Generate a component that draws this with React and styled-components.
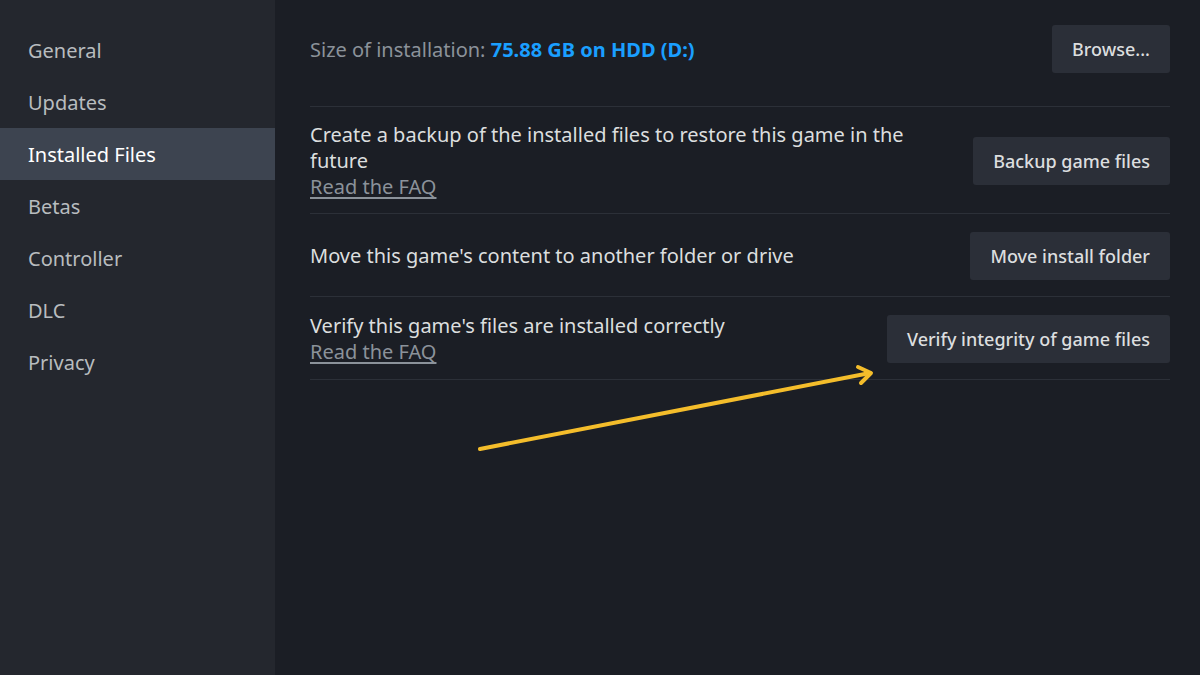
import React from "react";
import styled, { createGlobalStyle } from "styled-components";

const NAV = ["General", "Updates", "Installed Files", "Betas", "Controller", "DLC", "Privacy"];

const ROWS = [
  {
    text: "Create a backup of the installed files to restore this game in the future",
    faq: true,
    button: "Backup game files",
  },
  { text: "Move this game's content to another folder or drive", button: "Move install folder" },
  { text: "Verify this game's files are installed correctly", faq: true, button: "Verify integrity of game files" },
];

const App = () => (
  <Page>
    <GlobalStyle />
    <Sidebar>
      {NAV.map(item => (
        <NavItem key={item} active={item === "Installed Files"}>
          {item}
        </NavItem>
      ))}
    </Sidebar>
    <Main>
      <SizeRow>
        <SizeText>
          Size of installation: <Blue>75.88 GB on HDD (D:)</Blue>
        </SizeText>
        <Button>Browse...</Button>
      </SizeRow>
      {ROWS.map(row => (
        <Row key={row.button}>
          <RowText>
            <Description>{row.text}</Description>
            {row.faq && <Faq href="#">Read the FAQ</Faq>}
          </RowText>
          <Button>{row.button}</Button>
        </Row>
      ))}
      <Arrow viewBox="0 0 1200 675">
        <line x1="480" y1="449" x2="870" y2="373" stroke="#f4bd2b" strokeWidth="4" strokeLinecap="round" />
        <polyline
          points="858,367 871,373 861,383"
          fill="none"
          stroke="#f4bd2b"
          strokeWidth="4"
          strokeLinecap="round"
          strokeLinejoin="round"
        />
      </Arrow>
    </Main>
  </Page>
);

const GlobalStyle = createGlobalStyle`
  body {
    margin: 0;
    background: #1b1e25;
    font-family: "Noto Sans", "Open Sans", sans-serif;
  }
`;

const Page = styled.div`
  display: flex;
  width: 1200px;
  height: 675px;
  overflow: hidden;
  position: relative;
`;

const Sidebar = styled.nav`
  width: 275px;
  flex-shrink: 0;
  background: #24272e;
  padding-top: 24px;
  display: flex;
  flex-direction: column;
`;

const NavItem = styled.div`
  height: 52px;
  display: flex;
  align-items: center;
  padding-left: 28px;
  font-size: 20px;
  color: ${p => (p.active ? "#ffffff" : "#b8bcbf")};
  background: ${p => (p.active ? "#3d4450" : "transparent")};
`;

const Main = styled.main`
  flex: 1;
  padding: 25px 30px 0 35px;
  display: flex;
  flex-direction: column;
`;

const SizeRow = styled.div`
  display: flex;
  justify-content: space-between;
  align-items: center;
  padding-bottom: 33px;
  border-bottom: 1px solid #2c3038;
`;

const SizeText = styled.div`
  font-size: 20px;
  color: #8b929a;
`;

const Blue = styled.span`
  color: #1a9fff;
  font-weight: 700;
`;

const Row = styled.div`
  display: flex;
  justify-content: space-between;
  align-items: center;
  gap: 40px;
  min-height: 83px;
  padding: 15px 0 14px;
  border-bottom: 1px solid #2c3038;
  box-sizing: border-box;
`;

const RowText = styled.div`
  display: flex;
  flex-direction: column;
  max-width: 610px;
`;

const Description = styled.div`
  font-size: 20px;
  line-height: 26px;
  color: #dcdedf;
`;

const Faq = styled.a`
  font-size: 20px;
  line-height: 25px;
  color: #8b929a;
  text-decoration: underline;
  text-underline-offset: 3px;
`;

const Button = styled.button`
  flex-shrink: 0;
  height: 48px;
  padding: 0 20px;
  border: none;
  border-radius: 3px;
  background: #2b2f38;
  color: #dcdedf;
  font-family: inherit;
  font-size: 18px;
  font-weight: 500;
`;

const Arrow = styled.svg`
  position: absolute;
  left: 0;
  top: 0;
  width: 1200px;
  height: 675px;
  pointer-events: none;
`;

export default App;
